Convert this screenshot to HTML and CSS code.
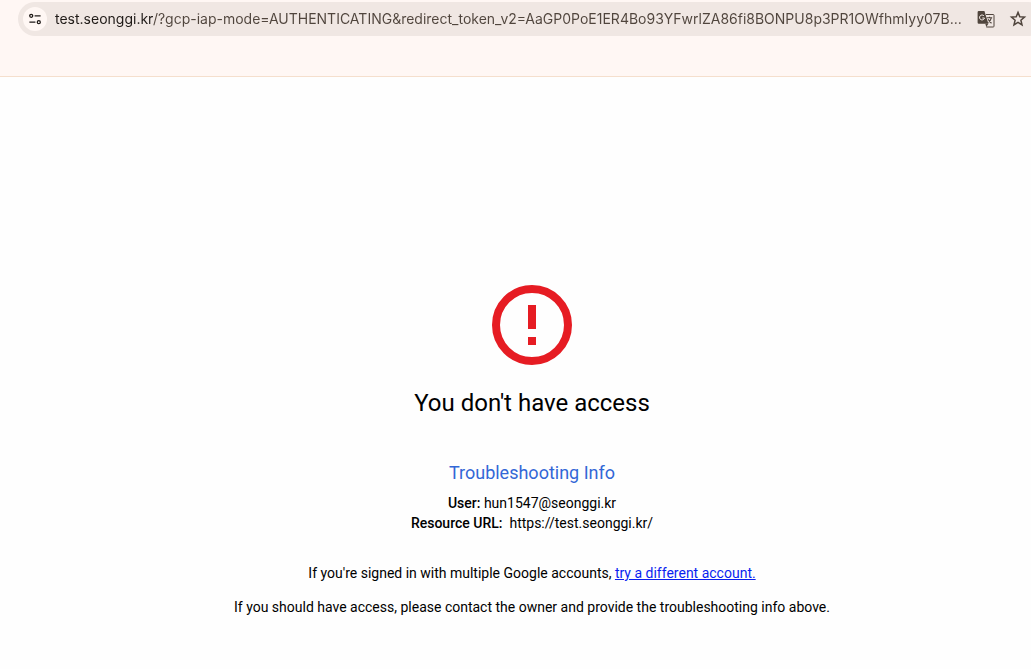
FILE: index.html
```html
<!DOCTYPE html>
<html lang="en">
<head>
<meta charset="UTF-8">
<title>You don't have access</title>
<link rel="stylesheet" href="styles.css">
</head>
<body>

<header class="toolbar">
    <form class="address-bar">
        <button type="button" class="site-info" aria-label="View site information">
            <svg width="14" height="14" viewBox="0 0 14 14" fill="none" stroke="#1f1a17" stroke-width="1.3">
                <circle cx="3.2" cy="3.8" r="1.5"/>
                <path d="M6.6 3.8H12.6M1.4 10.2H7.4"/>
                <circle cx="10.8" cy="10.2" r="1.5"/>
            </svg>
        </button>
        <input type="text" class="address" aria-label="Address" spellcheck="false" value="test.seonggi.kr/?gcp-iap-mode=AUTHENTICATING&amp;redirect_token_v2=AaGP0PoE1ER4Bo93YFwrlZA86fi8BONPU8p3PR1OWfhmIyy07B...">
        <button type="button" class="icon-button" aria-label="Translate this page">
            <svg width="18" height="18" viewBox="0 0 18 18" fill="none">
                <path d="M9 4.5h7.2a.8.8 0 0 1 .8.8v10.9a.8.8 0 0 1-.8.8H9.3" stroke="#50453d" stroke-width="1"/>
                <path d="M1.8 1h5.6l4 12.8H1.8a1.2 1.2 0 0 1-1.2-1.2V2.2A1.2 1.2 0 0 1 1.8 1z" fill="#50453d"/>
                <path d="M8.3 13.8h3.1L9.3 17z" fill="#50453d"/>
                <path d="M7 5.9A2.5 2.5 0 1 0 7.5 8H5.3" stroke="#f0e7e3" stroke-width="1"/>
                <path d="M9.8 7.8h5.4M12.5 6.7v1.1M14.3 7.8c-.4 2-1.5 3.4-3 4.6M11.2 9.2c.7 1.5 1.8 2.8 3.3 4" stroke="#50453d" stroke-width="1.1"/>
            </svg>
        </button>
        <button type="button" class="icon-button" aria-label="Bookmark this tab">
            <svg width="18" height="18" viewBox="0 0 18 18" fill="none" stroke="#50453d" stroke-width="1.5">
                <path d="M9 2.4l1.8 4.3 4.7.4-3.6 3.1 1.1 4.6L9 12.3l-4 2.5 1.1-4.6-3.6-3.1 4.7-.4z"/>
            </svg>
        </button>
    </form>
</header>

<main class="content">
    <svg class="error-icon" width="80" height="80" viewBox="0 0 80 80">
        <circle cx="40" cy="40" r="36" fill="none" stroke="#e61c23" stroke-width="8"/>
        <path d="M36 20h8v24h-8zM36 52h8v8h-8z" fill="#e61c23"/>
    </svg>
    <h1>You don't have access</h1>
    <h2>Troubleshooting Info</h2>
    <div class="info"><b>User:</b> hun1547@seonggi.kr</div>
    <div class="info"><b>Resource URL:</b>&nbsp; https://test.seonggi.kr/</div>
    <p class="switch">If you're signed in with multiple Google accounts, <a href="#">try a different account.</a></p>
    <p>If you should have access, please contact the owner and provide the troubleshooting info above.</p>
</main>

</body>
</html>
```
FILE: styles.css
```css
body {
    font-family: Roboto, sans-serif;
    font-size: 14px;
    line-height: 20px;
    color: #000;
    background: #fefefe;
    margin: 0;
    overflow-x: hidden;
}
.toolbar {
    background: #fff7f4;
    border-bottom: 1px solid #f5dfcd;
    padding: 2px 0 40px 18px;
    overflow: hidden;
}
.address-bar {
    display: flex;
    align-items: center;
    height: 34px;
    margin-right: -14px;
    padding: 0 18px 0 5px;
    background: #f0e7e3;
    border-radius: 17px;
}
.address-bar button {
    display: flex;
    align-items: center;
    justify-content: center;
    border: none;
    padding: 0;
    background: none;
    cursor: pointer;
}
.address-bar .site-info {
    width: 24px;
    height: 24px;
    border-radius: 50%;
    background: #fff7f4;
}
.address {
    flex: 1;
    min-width: 0;
    margin-left: 8px;
    border: none;
    padding: 0;
    outline: none;
    font-family: Inter, sans-serif;
    font-size: 14px;
    line-height: 20px;
    text-overflow: ellipsis;
    /* host name is darker than the rest of the address */
    background: linear-gradient(to right, #1f1a17 98px, #50453d 98px);
    -webkit-background-clip: text;
    background-clip: text;
    color: transparent;
    caret-color: #1f1a17;
}
.address-bar .icon-button {
    width: 18px;
    height: 18px;
    margin-left: 14px;
}
.content {
    display: flex;
    flex-direction: column;
    align-items: center;
    text-align: center;
    padding: 208px 0 40px 33px;
}
h1 {
    font-size: 24px;
    font-weight: 400;
    line-height: 32px;
    margin: 22px 0 40px;
}
h2 {
    font-size: 18px;
    font-weight: 400;
    line-height: 24px;
    color: #3367d6;
    margin: 2px 0 8px;
}
.info b {
    font-weight: 500;
}
p {
    margin: 0 0 14px;
}
.switch {
    margin-top: 30px;
}
a {
    color: #0a1ef0;
}
```
